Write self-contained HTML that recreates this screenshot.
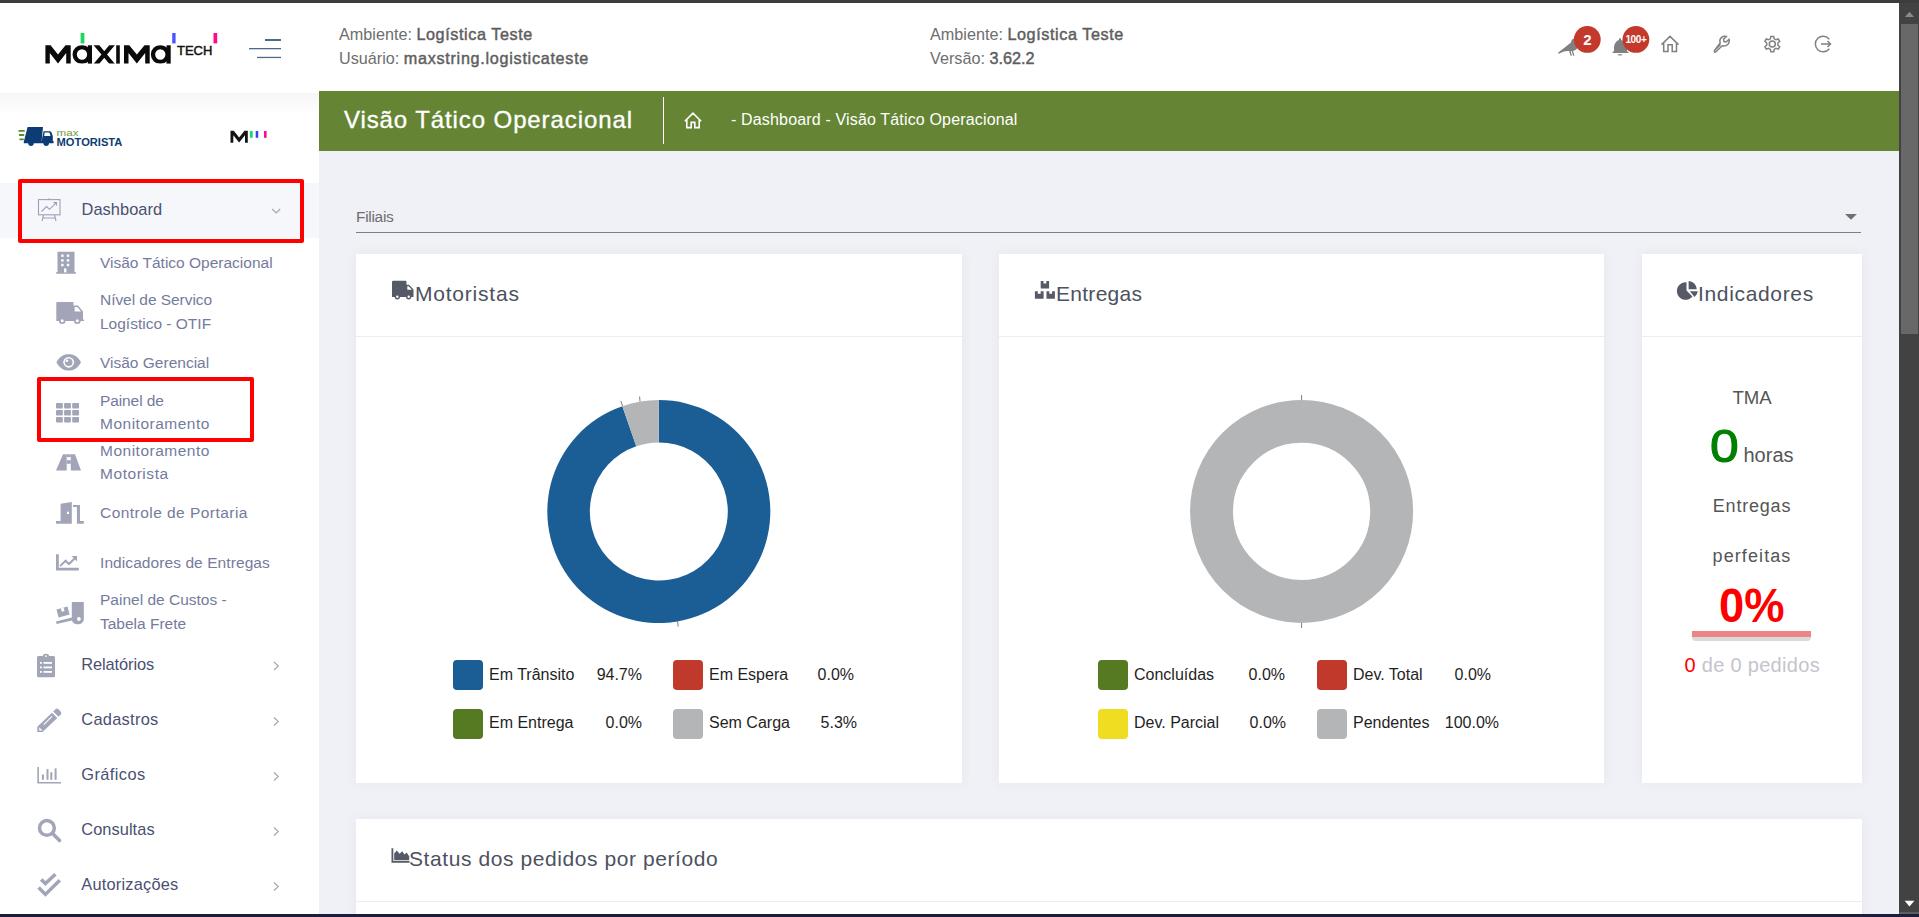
<!DOCTYPE html>
<html><head><meta charset="utf-8">
<style>
html,body{margin:0;padding:0;width:1919px;height:917px;overflow:hidden;background:#fff;font-family:"Liberation Sans",sans-serif;}
body{position:relative}
.a{position:absolute;white-space:nowrap}
svg{position:absolute;overflow:visible}
.hdr{color:#6e6e6e;font-size:16.2px;line-height:24px}
.hdr b{color:#5e5e5e;font-weight:normal;-webkit-text-stroke:0.45px #5e5e5e}
.side{color:#757b9d;font-size:15.5px;line-height:24px}
.mn{color:#4a5072;font-size:16.4px}
.chev{color:#a1a5b7}
.card{position:absolute;background:#fff;box-shadow:0 0 12px rgba(82,63,105,.06)}
.ch{position:absolute;left:0;right:0;top:82px;height:1px;background:#ebedf3}
.ct{position:absolute;color:#4d5160;font-size:21px}
.lg{position:absolute;width:30px;height:30px;border-radius:4px}
.lt{position:absolute;color:#1f1f1f;font-size:16px}
</style></head><body>
<!-- top dark strip -->
<div class="a" style="left:0;top:0;width:1919px;height:3px;background:#3c3c3c"></div>
<!-- sidebar shadow -->
<div class="a" style="left:0;top:93px;width:319px;height:22px;background:linear-gradient(#f6f6f6,#fff)"></div>
<!-- green bar -->
<div class="a" style="left:319px;top:91px;width:1580px;height:60px;background:#658535"></div>
<!-- content bg -->
<div class="a" style="left:319px;top:151px;width:1580px;height:763px;background:#f0f1f6"></div>
<!-- scrollbar -->
<div class="a" style="left:1899px;top:3px;width:20px;height:911px;background:#424242"></div>
<div class="a" style="left:1901px;top:24px;width:17px;height:310px;background:#686868"></div>
<svg style="left:1899px;top:3px" width="20" height="911" viewBox="1899 3 20 911"><path d="M1904.9,16.9 L1909.5,11.7 L1914,16.9 Z" fill="#8a8a8a"/><path d="M1904.6,900.8 H1914.4 L1909.5,906.4 Z" fill="#fff"/><rect x="1899" y="912.5" width="20" height="1" fill="#fff" opacity=".3"/></svg>
<!-- HEADER -->
<svg style="left:0;top:0" width="300" height="90" viewBox="0 0 300 90">
 <defs><clipPath id="lc"><rect x="40" y="45.3" width="140" height="18.3"/></clipPath></defs>
 <g fill="#0a0a0a">
  <path d="M45.4,63.6 V45.3 H50.6 L58,54.6 L65.5,45.3 H70.7 V63.6 H66.2 V53 L58,63.4 L49.8,53 V63.6 Z"/>
  <path d="M124,63.6 V45.3 H129.2 L136.85,54.6 L144.5,45.3 H149.7 V63.6 H145.2 V53 L136.85,63.4 L128.5,53 V63.6 Z"/>
  <rect x="116.2" y="45.3" width="3.6" height="18.3"/>
  <rect x="87.8" y="45.3" width="4.2" height="18.3"/>
  <rect x="166.5" y="45.3" width="4.2" height="18.3"/>
 </g>
 <g fill="none" stroke="#0a0a0a" stroke-width="4.3" clip-path="url(#lc)">
  <circle cx="82" cy="54.5" r="7.3"/>
  <circle cx="160.3" cy="54.5" r="7.3"/>
  <path d="M95,43.5 L113.5,65.5 M113.5,43.5 L95,65.5"/>
 </g>
 <rect x="80.6" y="33" width="3.8" height="10.4" fill="#1ed760"/>
 <rect x="172.2" y="33" width="3.4" height="10.4" fill="#4a55ff"/>
 <rect x="213.5" y="33" width="3.7" height="10.4" fill="#ff0a8c"/>
 <text x="177" y="54.7" font-family="Liberation Sans" font-size="12.4" fill="#111" stroke="#111" stroke-width="0.45" textLength="35.3" lengthAdjust="spacingAndGlyphs">TECH</text>
 <g fill="#4e6a8a">
  <rect x="265" y="39" width="16" height="2"/>
  <rect x="249" y="48" width="32" height="1.3"/>
  <rect x="257" y="56.8" width="24" height="1.3"/>
 </g>
</svg>
<div class="a hdr" style="left:339px;top:22px">Ambiente: <b style="letter-spacing:0.59px">Logística Teste</b><br>Usuário: <b style="letter-spacing:0.71px">maxstring.logisticateste</b></div>
<div class="a hdr" style="left:930px;top:22px">Ambiente: <b style="letter-spacing:0.59px">Logística Teste</b><br>Versão: <b>3.62.2</b></div>
<!-- header icons -->
<svg style="left:1540px;top:20px" width="320" height="50" viewBox="1540 20 320 50">
 <g fill="#808080">
  <!-- bird -->
  <path d="M1558,52.8 L1571,42.5 C1571.5,39 1574,37.8 1576.5,38.5 L1578,47 C1577,49.5 1575,50.5 1573,50.8 L1574.5,55.8 L1573.2,55.8 L1571.6,51 L1570.6,51 L1572,55.8 L1570.7,55.8 L1569,51 C1566,50.6 1562,51.6 1558.8,53.8 Z"/>
  <!-- bell -->
  <path d="M1620,38 C1621,38.2 1621.2,39.5 1621,40 C1625,41 1627,44 1627,48 L1627,51 L1629,53 L1612,53 L1614,51 L1614,48 C1614,44 1616,41 1619,40 C1618.8,39.5 1619,38.2 1620,38 Z M1617.5,54.3 L1622.5,54.3 C1622,56 1618,56 1617.5,54.3 Z"/>
 </g>
 <circle cx="1587.3" cy="39.4" r="13.4" fill="#c3392b"/>
 <circle cx="1635.9" cy="39.4" r="13.4" fill="#c3392b"/>
 <g fill="none" stroke="#808080" stroke-width="1.5">
  <!-- house -->
  <path d="M1661.5,44.6 L1670,36.4 L1678.5,44.6 M1663.7,43 V51.5 H1668 V44.8 H1672.2 V51.5 H1676.5 V43"/>
  <!-- wrench -->
  <path d="M1714.5,50.5 L1720.5,44.5 M1714.5,50.5 C1713.7,51.5 1715,52.7 1716,51.8 L1722.2,45.8 C1724.5,46.5 1727.8,45.5 1728.8,43 C1729.5,41.5 1729.3,40 1729,39.3 L1726.2,42 L1724,41.5 L1723.5,39.3 L1726.3,36.5 C1725,36 1723,36.2 1721.6,37.3 C1719.8,38.7 1719.6,41 1720.2,43 Z"/>
  <!-- gear outer -->
  <path d="M1770.9,36.4 H1773.7 L1774.2,38.8 L1776,39.8 L1778.3,39 L1779.7,41.4 L1777.9,43 V45.2 L1779.7,46.8 L1778.3,49.2 L1776,48.4 L1774.2,49.4 L1773.7,51.8 H1770.9 L1770.4,49.4 L1768.6,48.4 L1766.3,49.2 L1764.9,46.8 L1766.7,45.2 V43 L1764.9,41.4 L1766.3,39 L1768.6,39.8 L1770.4,38.8 Z"/>
  <circle cx="1772.3" cy="44.1" r="3"/>
  <!-- logout -->
  <path d="M1829.3,39.2 A7.8,7.8 0 1 0 1829.3,48.8"/>
  <path d="M1821,44 H1830.2 M1827.5,41 L1830.5,44 L1827.5,47"/>
 </g>
 <text x="1587.3" y="44.8" font-family="Liberation Sans" font-weight="bold" font-size="15" fill="#fff" text-anchor="middle">2</text>
 <text x="1635.9" y="43" font-family="Liberation Sans" font-weight="bold" font-size="10" fill="#fff" text-anchor="middle" letter-spacing="-0.4">100+</text>
</svg>
<!-- SIDEBAR -->
<svg style="left:0;top:110px" width="300" height="50" viewBox="0 110 300 50">
 <g fill="#5d8a2e">
  <rect x="18.4" y="130" width="6.5" height="1.8" rx=".9"/>
  <rect x="18.8" y="134.1" width="5.6" height="1.8" rx=".9"/>
  <rect x="19.2" y="138.4" width="4.8" height="1.8" rx=".9"/>
 </g>
 <g fill="#0d3b73">
  <path d="M27.6,127 H43 L41.6,141 H24 Z"/>
  <path d="M43.6,131.2 H49.8 Q50.8,131.2 51.4,132.2 L52.8,136 V141 H53.6 V143.2 H23.8 V141 H41.6 Z"/>
  <circle cx="31" cy="143.2" r="2.7"/><circle cx="46.2" cy="143.2" r="2.7"/>
 </g>
 <path d="M44.6,132.6 H49.4 L50.6,136 H44.2 Z" fill="#fff"/>
 <text x="56.6" y="136.3" font-family="Liberation Sans" font-size="9.2" fill="#6e9a3e" textLength="22" lengthAdjust="spacingAndGlyphs">max</text>
 <text x="56.6" y="145.6" font-family="Liberation Sans" font-weight="bold" font-size="11" fill="#0d3b73" textLength="65.8" lengthAdjust="spacingAndGlyphs">MOTORISTA</text>
 <path d="M230.5,142.7 V130.8 H233.8 L239.1,137.6 L244.5,130.8 H247.8 V142.7 H245 V135.2 L239.1,142.5 L233.3,135.2 V142.7 Z" fill="#141414"/>
 <rect x="249.9" y="131" width="2.8" height="6.8" fill="#1ed760"/>
 <rect x="255.7" y="131" width="2.5" height="6.8" fill="#3c3cff"/>
 <rect x="264" y="131" width="2.6" height="6.8" fill="#ff0a8c"/>
</svg>
<div class="a" style="left:0;top:183px;width:319px;height:55px;background:#f6f7fa"></div>
<div class="a" style="left:18px;top:179px;width:278px;height:56px;border:4px solid #ff0000;border-radius:2px"></div>
<div class="a" style="left:37px;top:377px;width:209px;height:57px;border:4px solid #ff0000;border-radius:2px"></div>
<div class="a mn" style="left:81.5px;top:196.5px;line-height:24px;letter-spacing:0.05px">Dashboard</div>
<div class="a side" style="left:100px;top:250.5px;letter-spacing:0px">Visão Tático Operacional</div>
<div class="a side" style="left:100px;top:288px;letter-spacing:-0.05px">Nível de Servico</div>
<div class="a side" style="left:100px;top:312px;letter-spacing:0px">Logístico - OTIF</div>
<div class="a side" style="left:100px;top:350.5px;letter-spacing:0px">Visão Gerencial</div>
<div class="a side" style="left:100px;top:388.5px;letter-spacing:-0.1px">Painel de</div>
<div class="a side" style="left:100px;top:412px;letter-spacing:0.5px">Monitoramento</div>
<div class="a side" style="left:100px;top:438.5px;letter-spacing:0.5px">Monitoramento</div>
<div class="a side" style="left:100px;top:462px;letter-spacing:0.55px">Motorista</div>
<div class="a side" style="left:100px;top:500.5px;letter-spacing:0.46px">Controle de Portaria</div>
<div class="a side" style="left:100px;top:550.5px;letter-spacing:0.08px">Indicadores de Entregas</div>
<div class="a side" style="left:100px;top:588px;letter-spacing:0px">Painel de Custos -</div>
<div class="a side" style="left:100px;top:612px;letter-spacing:0px">Tabela Frete</div>
<div class="a mn" style="left:81.3px;top:651.7px;line-height:24px;letter-spacing:-0.1px">Relatórios</div>
<div class="a mn" style="left:81.3px;top:706.7px;line-height:24px;letter-spacing:0.28px">Cadastros</div>
<div class="a mn" style="left:81.3px;top:761.7px;line-height:24px;letter-spacing:0.4px">Gráficos</div>
<div class="a mn" style="left:81.3px;top:816.7px;line-height:24px;letter-spacing:0.05px">Consultas</div>
<div class="a mn" style="left:81.3px;top:871.7px;line-height:24px;letter-spacing:0.2px">Autorizações</div>
<svg style="left:0;top:180px" width="318" height="734" viewBox="0 180 318 734">
 <g fill="none" stroke="#a1a5b7" stroke-width="1.1">
  <path d="M272.2,209 L276.2,213 L280.2,209"/>
  <path d="M274,662 L278.3,666 L274,670 M274,717.5 L278.3,721.5 L274,725.5 M274,772.5 L278.3,776.5 L274,780.5 M274,827.5 L278.3,831.5 L274,835.5 M274,882.5 L278.3,886.5 L274,890.5"/>
 </g>
 <!-- easel -->
 <g fill="none" stroke="#9aa0bb" stroke-width="1.1">
  <rect x="38.5" y="199.6" width="21.5" height="15.2"/>
  <path d="M49,198.2 V199.6 M42,202.5 V202.5 M41.5,211.5 L46.5,206.5 L49.5,209.3 L56.5,202.6 M53.5,202.6 H56.5 V205.5 M43.5,215 L42,221 M54.5,215 L56,221 M43,218 H55"/>
 </g>
 <g fill="#a1a5b7">
  <!-- building -->
  <path d="M57.5,251.8 H74.5 V272 H75.8 V273.7 H56.3 V272 H57.5 Z" />
  <g fill="#fff">
   <rect x="61.2" y="254.5" width="2.4" height="2.4"/><rect x="66.8" y="254.5" width="2.4" height="2.4"/>
   <rect x="61.2" y="259.2" width="2.4" height="2.4"/><rect x="66.8" y="259.2" width="2.4" height="2.4"/>
   <rect x="61.2" y="263.8" width="2.4" height="2.4"/><rect x="66.8" y="263.8" width="2.4" height="2.4"/>
   <rect x="64" y="268.4" width="2.4" height="4"/>
  </g>
  <!-- truck -->
  <path d="M56.3,303 Q56.3,302 57.3,302 H73.5 V305.5 H78 L83,311.5 V319.5 H84 V321 H56.3 Z"/>
  <path d="M74.6,307 H77.4 L81,311.5 H74.6 Z" fill="#fff"/>
  <circle cx="62.2" cy="320.8" r="3.3"/><circle cx="77.3" cy="320.8" r="3.3"/>
  <circle cx="62.2" cy="320.8" r="1.5" fill="#fff"/><circle cx="77.3" cy="320.8" r="1.5" fill="#fff"/>
  <!-- eye -->
  <path d="M56.4,362.3 C60,355.5 64.5,354.2 68.7,354.2 C72.9,354.2 77.4,355.5 81,362.3 C77.4,369.1 72.9,370.5 68.7,370.5 C64.5,370.5 60,369.1 56.4,362.3 Z"/>
  <circle cx="68.7" cy="362.3" r="5.4" fill="#fff"/>
  <circle cx="68.7" cy="362.3" r="3.8"/>
  <circle cx="67" cy="360.8" r="1.3" fill="#fff"/>
  <!-- grid -->
  <rect x="56" y="403" width="6.8" height="5.6" rx=".8"/><rect x="64.1" y="403" width="6.8" height="5.6" rx=".8"/><rect x="72.2" y="403" width="6.8" height="5.6" rx=".8"/>
  <rect x="56" y="410" width="6.8" height="5.6" rx=".8"/><rect x="64.1" y="410" width="6.8" height="5.6" rx=".8"/><rect x="72.2" y="410" width="6.8" height="5.6" rx=".8"/>
  <rect x="56" y="417" width="6.8" height="5.6" rx=".8"/><rect x="64.1" y="417" width="6.8" height="5.6" rx=".8"/><rect x="72.2" y="417" width="6.8" height="5.6" rx=".8"/>
  <!-- road -->
  <path d="M63,454.3 H66.7 V470.5 H56 Z M70.8,454.3 H75 L81,470.5 H70.8 Z"/>
  <rect x="66.7" y="454.3" width="4.1" height="2.8"/><rect x="66.7" y="460.2" width="4.1" height="3.6"/><rect x="66.7" y="466.4" width="4.1" height="0.1"/>
  <!-- door -->
  <path d="M60.6,503.8 L71.8,502 V523.7 H56 V521 H60.6 Z"/>
  <path d="M73,505 H80 V521 H83.8 V523.7 H76.9 V507 H73 Z"/>
  <rect x="67" y="511.7" width="2" height="2.3" fill="#fff"/>
  <!-- chart -->
  <path d="M56,554.3 H58.8 V567.7 H78.8 V570.5 H56 Z"/>
  <path d="M60.6,566.8 L59.4,565.5 L65.6,559.3 L69,562.6 L73.6,558 L71.5,556.1 H77 V561.6 L75,559.6 L69,565.5 L65.6,562.2 Z"/>
  <!-- dolly -->
  <path d="M71.8,602 H83.8 V619 A6,5 0 0 1 72,620.5 L56.6,624 L56,621.4 L71.8,617.6 Z"/>
  <circle cx="78.9" cy="619" r="1.9" fill="#fff"/>
  <path d="M56.5,609.6 L67.5,606.6 L69.6,614.6 L58.6,617.6 Z"/>
  <path d="M60.8,608.4 L63.6,607.6 L64.6,611 L61.8,611.8 Z" fill="#fff"/>
  <!-- clipboard -->
  <path d="M38.5,656 H43 Q43,653.8 46,653.8 Q49,653.8 49,656 H53.5 Q55,656 55,657.5 V675.7 Q55,677.2 53.5,677.2 H38.5 Q37,677.2 37,675.7 V657.5 Q37,656 38.5,656 Z"/>
  <circle cx="46" cy="656.2" r="0.9" fill="#fff"/>
  <g fill="#fff"><rect x="40" y="662" width="1.8" height="1.8"/><rect x="43.5" y="662" width="8.5" height="1.8"/><rect x="40" y="666.5" width="1.8" height="1.8"/><rect x="43.5" y="666.5" width="8.5" height="1.8"/><rect x="40" y="671" width="1.8" height="1.8"/><rect x="43.5" y="671" width="8.5" height="1.8"/></g>
  <!-- pencil -->
  <path d="M56,708.7 Q57.5,708.2 59.8,710.5 Q61.8,712.6 61.3,714 L58.5,716.8 L53.2,711.5 Z"/>
  <path d="M52,712.7 L57.3,718 L42.5,732 H37.3 V726.8 Z"/>
  <path d="M43.4,724.2 L51.6,716 L52.4,716.8 L44.2,725 Z" fill="#fff"/>
  <path d="M39.2,727.2 L42.6,730.4 L39.2,730.6 Z" fill="#fff"/>
  <!-- bars -->
  <path d="M37.3,766.9 H38.9 V782.1 H61 V783.6 H37.3 Z"/>
  <rect x="41.9" y="774.5" width="2" height="5.3"/><rect x="46.5" y="769.1" width="2" height="10.7"/><rect x="50.3" y="772.2" width="2" height="7.6"/><rect x="54.6" y="768.4" width="2" height="11.4"/>
 </g>
 <g fill="none" stroke="#a1a5b7" stroke-width="3.5">
  <!-- search -->
  <circle cx="46.9" cy="827.9" r="7.4"/>
  <path d="M52.3,833.3 L59.6,840.6" stroke-linecap="round"/>
  <!-- double check -->
  <path d="M38.6,887.6 L45.4,894.4 L59.8,880.2"/>
  <path d="M41.2,879.4 L45.4,883.6 L55.4,874.2"/>
 </g>
</svg>
<!-- TITLE BAR -->
<div class="a" style="left:344px;top:104px;font-size:24px;line-height:32px;color:#fff;letter-spacing:0.9px;-webkit-text-stroke:0.35px #fff">Visão Tático Operacional</div>
<div class="a" style="left:663px;top:97px;width:1px;height:47px;background:#fff"></div>
<svg style="left:680px;top:108px" width="30" height="26" viewBox="680 108 30 26">
 <path d="M684.8,121.2 L693,113.2 L701.2,121.2 M686.8,119.4 V127.6 H691.2 V122.4 H694.8 V127.6 H699.2 V119.4" fill="none" stroke="#fff" stroke-width="1.6" stroke-linejoin="miter"/>
</svg>
<div class="a" style="left:731px;top:108px;font-size:16px;line-height:24px;color:#fff;letter-spacing:0.16px">- Dashboard - Visão Tático Operacional</div>
<!-- FILIAIS -->
<div class="a" style="left:356px;top:204.5px;font-size:15.5px;line-height:24px;color:#6e6e6e;letter-spacing:-0.3px">Filiais</div>
<div class="a" style="left:356px;top:232px;width:1505px;height:1px;background:#7b7e84"></div>
<svg style="left:1840px;top:210px" width="20" height="15" viewBox="1840 210 20 15"><path d="M1845,213.9 H1856.9 L1851,219.8 Z" fill="#6f6f6f"/></svg>
<!-- CARDS -->
<div class="card" style="left:356px;top:254px;width:606px;height:529px"><div class="ch"></div></div>
<div class="card" style="left:999px;top:254px;width:605px;height:529px"><div class="ch"></div></div>
<div class="card" style="left:1642px;top:254px;width:220px;height:529px"><div class="ch"></div></div>
<div class="card" style="left:356px;top:819px;width:1506px;height:120px"><div class="ch"></div></div>
<div class="ct" style="left:415px;top:281px;line-height:26px;letter-spacing:0.78px">Motoristas</div>
<div class="ct" style="left:1056px;top:281px;line-height:26px;letter-spacing:0.28px">Entregas</div>
<div class="ct" style="left:1698px;top:281px;line-height:26px;letter-spacing:0.66px">Indicadores</div>
<div class="ct" style="left:409px;top:846px;line-height:26px;letter-spacing:0.58px">Status dos pedidos por período</div>
<svg style="left:380px;top:270px" width="1460" height="600" viewBox="380 270 1460 600">
 <g fill="#555a66">
  <!-- truck -->
  <path d="M392,282 Q392,280.8 393.2,280.8 H405.5 Q406.5,280.8 406.5,282 V284.8 H409 L413.5,289.5 V297 H392 Z"/>
  <path d="M407.3,286.3 H408.6 L412,289.8 H407.3 Z" fill="#fff"/>
  <circle cx="397.3" cy="296.8" r="2.6"/><circle cx="408.7" cy="296.8" r="2.6"/>
  <circle cx="397.3" cy="296.8" r="1.2" fill="#fff"/><circle cx="408.7" cy="296.8" r="1.2" fill="#fff"/>
  <!-- boxes -->
  <path d="M1040.7,281.1 H1043.5 V283.6 H1046.3 V281.1 H1049.1 V288.6 H1040.7 Z"/>
  <path d="M1034.9,291.2 H1037.8 V293.7 H1040.7 V291.2 H1043.6 V298.8 H1034.9 Z"/>
  <path d="M1046.5,291.2 H1049.3 V293.7 H1052.1 V291.2 H1054.9 V298.8 H1046.5 Z"/>
  <!-- pie -->
  <path d="M1686.5,282.3 V290.5 L1692.5,296.6 A8.8,8.8 0 1 1 1686.5,282.3 Z"/>
  <path d="M1688.6,281 A8.8,8.8 0 0 1 1696.8,289.2 H1688.6 Z"/>
  <path d="M1689.8,291.2 H1697.8 A8.8,8.8 0 0 1 1694.6,297 Z"/>
  <!-- area chart icon -->
  <path d="M391.5,848.3 H393.3 V860.9 H409.5 V862.7 H391.5 Z"/>
  <path d="M394.2,860.2 V853.5 L396.8,850.6 L399.6,853.8 L402.2,851.2 L404.6,854.4 L406.6,852.6 L409.2,856.2 V860.2 Z"/>
 </g>
</svg>
<!-- DONUTS -->
<svg style="left:540px;top:390px" width="780" height="250" viewBox="540 390 780 250">
 <path d="M658.80,400.00 A111.5,111.5 0 1 1 622.35,406.13 L636.24,446.29 A69,69 0 1 0 658.80,442.50 Z" fill="#1b5e96"/>
 <path d="M622.35,406.13 A111.5,111.5 0 0 1 658.80,400.00 L658.80,442.50 A69,69 0 0 0 636.24,446.29 Z" fill="#b4b5b7"/>
 <g stroke="#707070" stroke-width="0.9">
  <path d="M620.8,400.8 L622.6,406"/><path d="M639.6,396.5 L640,401.5"/><path d="M677.5,620.5 L678.2,626.5"/>
  <path d="M1301.6,395 V400"/><path d="M1301.6,623 V628"/>
 </g>
 <circle cx="1301.6" cy="511.4" r="90.05" fill="none" stroke="#b4b5b7" stroke-width="42.9"/>
</svg>
<!-- LEGENDS -->
<div class="lg" style="left:453px;top:660px;background:#1b5e96"></div>
<div class="lg" style="left:673px;top:660px;background:#c0392b"></div>
<div class="lg" style="left:453px;top:709px;background:#557a22"></div>
<div class="lg" style="left:673px;top:709px;background:#b4b5b7"></div>
<div class="lt" style="left:489px;top:666px">Em Trânsito</div>
<div class="lt" style="left:709px;top:666px">Em Espera</div>
<div class="lt" style="left:489px;top:714px">Em Entrega</div>
<div class="lt" style="left:709px;top:714px">Sem Carga</div>
<div class="lt r" style="left:542px;width:100px;top:666px;text-align:right">94.7%</div>
<div class="lt r" style="left:542px;width:100px;top:714px;text-align:right">0.0%</div>
<div class="lt r" style="left:754px;width:100px;top:666px;text-align:right">0.0%</div>
<div class="lt r" style="left:757px;width:100px;top:714px;text-align:right">5.3%</div>

<div class="lg" style="left:1098px;top:660px;background:#557a22"></div>
<div class="lg" style="left:1317px;top:660px;background:#c0392b"></div>
<div class="lg" style="left:1098px;top:709px;background:#f0dc20"></div>
<div class="lg" style="left:1317px;top:709px;background:#b4b5b7"></div>
<div class="lt" style="left:1134px;top:666px">Concluídas</div>
<div class="lt" style="left:1353px;top:666px">Dev. Total</div>
<div class="lt" style="left:1134px;top:714px">Dev. Parcial</div>
<div class="lt" style="left:1353px;top:714px">Pendentes</div>
<div class="lt r" style="left:1185px;width:100px;top:666px;text-align:right">0.0%</div>
<div class="lt r" style="left:1186px;width:100px;top:714px;text-align:right">0.0%</div>
<div class="lt r" style="left:1391px;width:100px;top:666px;text-align:right">0.0%</div>
<div class="lt r" style="left:1399px;width:100px;top:714px;text-align:right">100.0%</div>
<!-- INDICADORES -->
<div class="a" style="left:1642px;width:220px;top:386px;text-align:center;font-size:18.6px;line-height:24px;color:#555">TMA</div>
<div class="a" style="left:1709.5px;top:421.3px;font-size:47px;line-height:50px;color:#008000;-webkit-text-stroke:1.1px #008000;transform:scaleX(1.1);transform-origin:0 0">0</div>
<div class="a" style="left:1743.5px;top:442px;font-size:20px;line-height:26px;color:#555">horas</div>
<div class="a" style="left:1642px;width:220px;top:494px;text-align:center;font-size:18px;line-height:24px;color:#555;letter-spacing:0.8px">Entregas</div>
<div class="a" style="left:1642px;width:220px;top:544px;text-align:center;font-size:18px;line-height:24px;color:#555;letter-spacing:1.1px">perfeitas</div>
<div class="a" style="left:1718.5px;top:580px;font-size:48.5px;line-height:50px;font-weight:bold;color:#ff0000;transform:scaleX(0.935);transform-origin:0 0">0%</div>
<div class="a" style="left:1692px;top:631px;width:119px;height:9.7px;background:#d9d9d9;border-radius:0 0 4px 4px"></div>
<div class="a" style="left:1692px;top:631px;width:119px;height:6px;background:#ee8585"></div>
<div class="a" style="left:1684.5px;top:653px;font-size:20px;line-height:24px;color:#c4c4cc;letter-spacing:0.3px"><span style="color:#ff0000">0</span> de 0 pedidos</div>
<!-- bottom strip -->
<div class="a" style="left:0;top:914px;width:1919px;height:3px;background:#1d1d3e"></div>

</body></html>
